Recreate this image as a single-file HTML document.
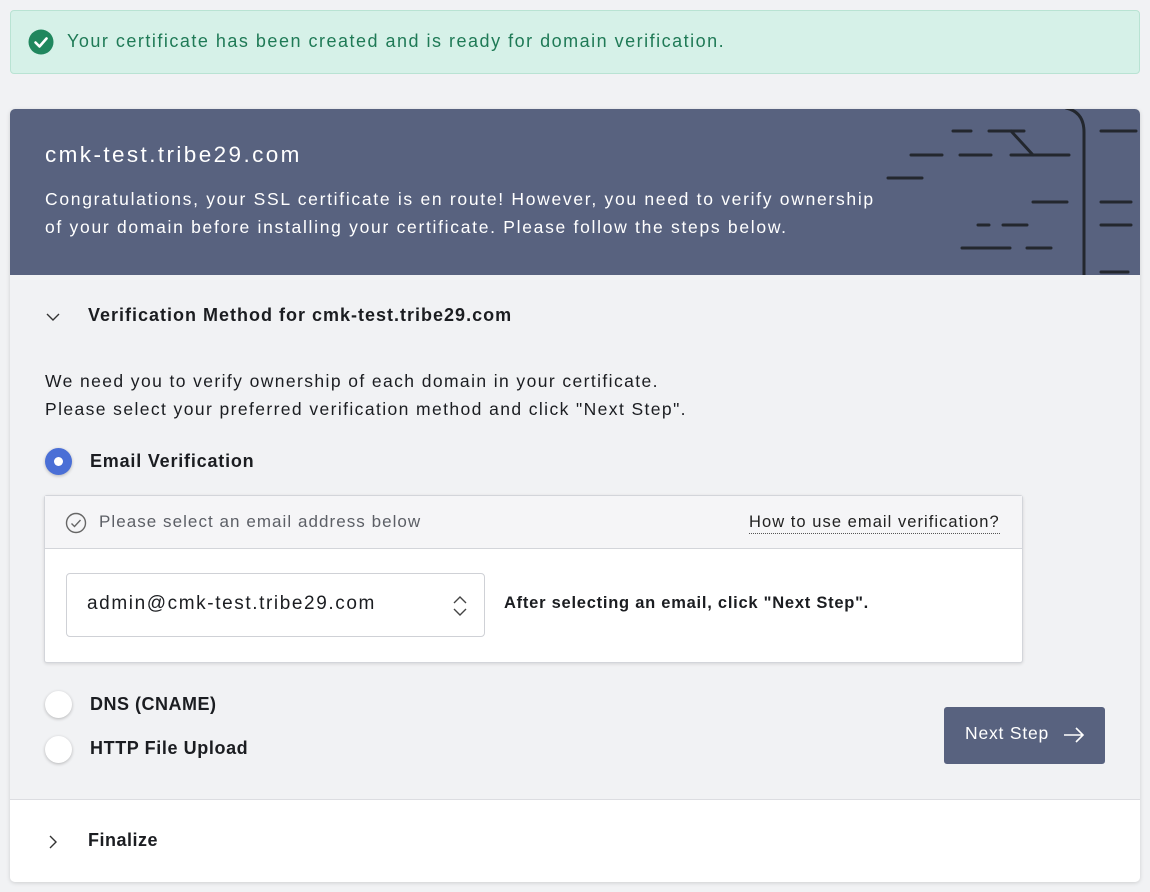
<!DOCTYPE html>
<html><head><meta charset="utf-8"><style>
*{box-sizing:border-box;margin:0;padding:0}
body{width:1150px;height:892px;background:#f1f2f4;font-family:"Liberation Sans",sans-serif;color:#1b1d21;position:relative;overflow:hidden}
.a{position:absolute;white-space:nowrap}
.alert{left:10px;top:10px;width:1130px;height:64px;background:#d6f1e8;border:1px solid #b9e3d3;border-radius:4px}
.alert span{position:absolute;left:56px;top:20px;font-size:18px;color:#1f7a56;letter-spacing:1.5px}
.card{left:10px;top:109px;width:1130px;height:773px;border-radius:5px;background:#f1f2f4;box-shadow:0 1px 4px rgba(0,0,0,.15);overflow:hidden}
.hdr{left:0;top:0;width:1130px;height:166px;background:#58627f;color:#fff}
.radio{width:27px;height:27px;border-radius:50%;background:#fff;box-shadow:0 1px 3px rgba(0,0,0,.25)}
.lbl{font-size:18px;font-weight:bold;color:#1b1d21}
</style></head><body>
<div class="a alert">
<svg class="a" style="left:17px;top:18px" width="26" height="26" viewBox="0 0 26 26"><circle cx="13" cy="13" r="12.5" fill="#20875e"/><path d="M7.5 13.5l4 4 7-8" stroke="#fff" stroke-width="2.6" fill="none" stroke-linecap="round" stroke-linejoin="round"/></svg>
<span>Your certificate has been created and is ready for domain verification.</span></div>
<div class="a card">
<div class="a hdr">
<div class="a" style="left:35px;top:33px;font-size:22.5px;letter-spacing:2.4px">cmk-test.tribe29.com</div>
<div class="a" style="left:35px;top:76px;font-size:17.5px;line-height:28px;letter-spacing:1.7px">Congratulations, your SSL certificate is en route! However, you need to verify ownership<br>of your domain before installing your certificate. Please follow the steps below.</div>
<svg class="a" style="left:0;top:0" width="1130" height="166" viewBox="10 109 1130 166"><g stroke="#23272e" stroke-width="3" stroke-linecap="round" fill="none">
<path d="M953 131h18M989 131h35M1101 131h35M911 155h31M960 155h31M1011 155h58M1011 131l22 24M888 178h34M1033 202h34M1101 202h30M978 225h11M1003 225h24M1101 225h30M962 248h48M1027 248h24M1101 272h27"/>
<path d="M1066 108q18 4 18 24V276"/></g></svg>
</div>
<svg class="a" style="left:36px;top:201px" width="14" height="14" viewBox="0 0 14 14"><path d="M1 4l6 6 6-6" stroke="#333" stroke-width="1.4" fill="none"/></svg>
<div class="a lbl" style="left:78px;top:196px;letter-spacing:1px">Verification Method for cmk-test.tribe29.com</div>
<div class="a" style="left:35px;top:258px;font-size:17.5px;line-height:28px;letter-spacing:1.4px">We need you to verify ownership of each domain in your certificate.<br>Please select your preferred verification method and click "Next Step".</div>
<div class="a radio" style="left:35px;top:339px;background:#4a6fd6"><div class="a" style="left:9px;top:9px;width:9px;height:9px;border-radius:50%;background:#fff"></div></div>
<div class="a lbl" style="left:80px;top:342px;letter-spacing:0.8px">Email Verification</div>
<div class="a" style="left:34px;top:386px;width:979px;height:168px;background:#fff;border:1px solid #d3d5da;border-radius:3px;box-shadow:0 1px 3px rgba(0,0,0,.12)">
<div class="a" style="left:0;top:0;width:977px;height:53px;background:#f5f5f7;border-bottom:1px solid #d3d5da"></div>
<svg class="a" style="left:20px;top:16px" width="22" height="22" viewBox="0 0 22 22"><circle cx="11" cy="11" r="9.5" stroke="#666" stroke-width="1.4" fill="none"/><path d="M6.5 11.5l3 3 6-6.5" stroke="#666" stroke-width="1.4" fill="none"/></svg>
<div class="a" style="left:54px;top:16px;font-size:17px;color:#5c5f66;letter-spacing:1.05px">Please select an email address below</div>
<div class="a" style="left:704px;top:16px;font-size:16.5px;color:#222;border-bottom:1px dotted #555;line-height:21px;letter-spacing:1.05px">How to use email verification?</div>
<div class="a" style="left:21px;top:77px;width:419px;height:64px;border:1px solid #cfd1d6;border-radius:4px">
<div class="a" style="left:20px;top:19px;font-size:19px;color:#1b1d21;letter-spacing:1.6px">admin@cmk-test.tribe29.com</div>
<svg class="a" style="left:385px;top:21px" width="16" height="22" viewBox="0 0 16 22"><path d="M2 8l6-6 6 6M2 14l6 6 6-6" stroke="#444" stroke-width="1.4" fill="none"/></svg></div>
<div class="a" style="left:459px;top:98px;font-size:16.5px;font-weight:bold;color:#1b1d21;letter-spacing:0.75px">After selecting an email, click "Next Step".</div>
</div>
<div class="a radio" style="left:35px;top:582px"></div>
<div class="a lbl" style="left:80px;top:585px;letter-spacing:0.5px">DNS (CNAME)</div>
<div class="a radio" style="left:35px;top:627px"></div>
<div class="a lbl" style="left:80px;top:629px;letter-spacing:0.6px">HTTP File Upload</div>
<div class="a" style="left:934px;top:598px;width:161px;height:57px;background:#58627f;border-radius:3px;color:#fff;font-size:17.5px"><span class="a" style="left:21px;top:16px;letter-spacing:0.8px">Next Step</span>
<svg class="a" style="left:119px;top:19px" width="22" height="18" viewBox="0 0 22 18"><path d="M1 9h19M13 2l7 7-7 7" stroke="#fff" stroke-width="1.6" fill="none"/></svg></div>
<div class="a" style="left:0;top:690px;width:1130px;height:83px;background:#fff;border-top:1px solid #dcdde1">
<svg class="a" style="left:36px;top:35px" width="14" height="14" viewBox="0 0 14 14"><path d="M4 1l6 6-6 6" stroke="#333" stroke-width="1.4" fill="none"/></svg>
<div class="a lbl" style="left:78px;top:30px;letter-spacing:0.5px">Finalize</div></div>
</div>
</body></html>
